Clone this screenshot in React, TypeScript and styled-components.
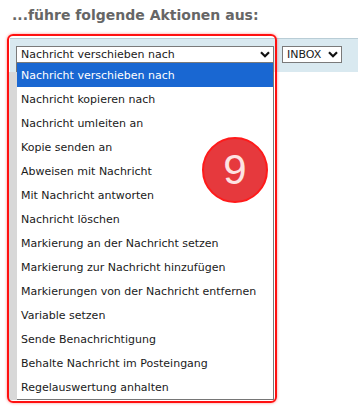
import React from 'react';
import styled, { createGlobalStyle } from 'styled-components';

const GlobalStyle = createGlobalStyle`
    body {
        margin: 0;
        background: #ffffff;
        font-family: "DejaVu Sans", Verdana, sans-serif;
    }
`;

const Page = styled.div`
    position: relative;
    width: 358px;
    height: 412px;
    overflow: hidden;
    background: #ffffff;
`;

const Heading = styled.h2`
    margin: 0;
    padding: 7px 0 0 12px;
    height: 38px;
    box-sizing: border-box;
    font-size: 14px;
    line-height: 17px;
    font-weight: bold;
    color: #666666;
`;

const ActionBar = styled.div`
    margin-left: 10px;
    height: 34px;
    box-sizing: border-box;
    border-top: 1px solid #b9cdd6;
    background: #d9e9f0;
    display: flex;
    align-items: flex-start;
    gap: 8px;
    padding: 7px 0 0 6px;
`;

const SelectBox = styled.div<{ $width: number }>`
    width: ${p => p.$width}px;
    height: 17px;
    box-sizing: border-box;
    border: 1px solid #7a7a7a;
    background: #ffffff;
    display: flex;
    align-items: center;
    justify-content: space-between;
    padding: 0 3px 0 4px;
    font-size: 11px;
    color: #1a1a1a;
`;

const Chevron = () => (
    <svg width="10" height="7" viewBox="0 0 10 7">
        <path d="M1 1.2 L5 5.2 L9 1.2" fill="none" stroke="#111" strokeWidth="2.2" />
    </svg>
);

const OptionList = styled.ul`
    position: absolute;
    left: 16px;
    top: 63px;
    width: 258px;
    margin: 0;
    padding: 0;
    list-style: none;
    box-sizing: border-box;
    border: 1px solid #767676;
    border-top: none;
    background: #ffffff;

    &::before {
        content: "";
        position: absolute;
        left: -8px;
        top: 9px;
        bottom: -1px;
        width: 8px;
        background: #d8d8d8;
    }
`;

const Option = styled.li<{ $active?: boolean }>`
    height: 24px;
    display: flex;
    align-items: center;
    padding-left: 4px;
    font-size: 11px;
    color: ${p => (p.$active ? '#ffffff' : '#1a1a1a')};
    background: ${p => (p.$active ? '#1967d2' : 'transparent')};
`;

const Highlight = styled.div`
    position: absolute;
    left: 7px;
    top: 34px;
    width: 270px;
    height: 369px;
    box-sizing: border-box;
    border: 2px solid #ff1010;
    border-radius: 6px;
    box-shadow: 0 0 3px rgba(255, 0, 0, 0.45);
    pointer-events: none;
`;

const StepBadge = styled.div`
    position: absolute;
    left: 202px;
    top: 137px;
    width: 66px;
    height: 66px;
    box-sizing: border-box;
    border-radius: 50%;
    border: 2px solid #ff1a1a;
    background: #e6393d;
    display: flex;
    align-items: center;
    justify-content: center;
    font-family: "Liberation Sans", Arial, sans-serif;
    font-size: 42px;
    color: #fde3e3;
`;

const actions = [
    'Nachricht verschieben nach',
    'Nachricht kopieren nach',
    'Nachricht umleiten an',
    'Kopie senden an',
    'Abweisen mit Nachricht',
    'Mit Nachricht antworten',
    'Nachricht löschen',
    'Markierung an der Nachricht setzen',
    'Markierung zur Nachricht hinzufügen',
    'Markierungen von der Nachricht entfernen',
    'Variable setzen',
    'Sende Benachrichtigung',
    'Behalte Nachricht im Posteingang',
    'Regelauswertung anhalten',
];

export default function App() {
    return (
        <Page>
            <GlobalStyle />
            <Heading>...führe folgende Aktionen aus:</Heading>
            <ActionBar>
                <SelectBox $width={258}>
                    <span>Nachricht verschieben nach</span>
                    <Chevron />
                </SelectBox>
                <SelectBox $width={60}>
                    <span>INBOX</span>
                    <Chevron />
                </SelectBox>
            </ActionBar>
            <OptionList>
                {actions.map((a, i) => (
                    <Option key={a} $active={i === 0}>{a}</Option>
                ))}
            </OptionList>
            <Highlight />
            <StepBadge>9</StepBadge>
        </Page>
    );
}
